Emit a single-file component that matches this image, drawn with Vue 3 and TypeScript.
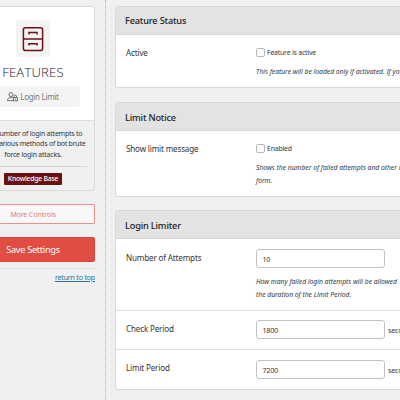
<script setup lang="ts">
interface Field {
  label: string
  kind: 'check' | 'number'
  value: string
  unit?: string
  help?: string[]
  size: string
}
interface Panel {
  title: string
  name: string
  fields: Field[]
}

const panels: Panel[] = [
  {
    title: 'Feature Status',
    name: 'status',
    fields: [
      { label: 'Active', kind: 'check', value: 'Feature is active', help: ['This feature will be loaded only if activated. If you'], size: 'f53' },
    ],
  },
  {
    title: 'Limit Notice',
    name: 'notice',
    fields: [
      { label: 'Show limit message', kind: 'check', value: 'Enabled', help: ['Shows the number of failed attempts and other limit', 'form.'], size: 'f65' },
    ],
  },
  {
    title: 'Login Limiter',
    name: 'limiter',
    fields: [
      { label: 'Number of Attempts', kind: 'number', value: '10', help: ['How many failed login attempts will be allowed', 'the duration of the Limit Period.'], size: 'f71' },
      { label: 'Check Period', kind: 'number', value: '1800', unit: 'seconds', size: 'f39' },
      { label: 'Limit Period', kind: 'number', value: '7200', unit: 'seconds', size: 'f39' },
    ],
  },
]
const about: string[] = ['the number of login attempts to', 'stop various methods of bot brute', 'force login attacks.']
</script>

<template>
  <div class="page">
    <aside class="sidebar">
      <section class="card">
        <div class="card-top">
          <div class="logo">
            <svg width="22" height="26" viewBox="0 0 22 26" fill="none" stroke="#6d1214" stroke-width="1.5">
              <rect x="1.4" y="1.8" width="19.2" height="22.6" rx="1.8" />
              <path d="M1.4 13.1H20.6M7 8.4V6.5H15V8.4M7 19.6V17.7H15V19.6" />
            </svg>
          </div>
          <h1>FEATURES</h1>
          <div class="chip">
            <svg width="11" height="10" viewBox="0 0 11 10" fill="none" stroke="#60646b" stroke-width="0.9">
              <circle cx="4" cy="2.6" r="2" />
              <path d="M.5 8.6C.5 6.4 1.8 5.5 4 5.5c.8 0 1.4.1 1.9.4M.3 8.7H6M7.2 5.5V4.2c0-1.6 2.3-1.6 2.3 0v1.3" />
              <rect x="6.4" y="5.5" width="4" height="3.3" />
              <path d="M8.4 6.5v1.2" />
            </svg>
            <span>Login Limit</span>
          </div>
        </div>
        <div class="card-info">
          <p v-for="line in about" :key="line">{{ line }}</p>
          <hr />
          <a class="kb"><span>Knowledge Base</span></a>
        </div>
      </section>
      <button class="more"><span>More Controls</span></button>
      <button class="save"><span>Save Settings</span></button>
      <div class="top-link"><a>return to top</a></div>
    </aside>
    <main class="main">
      <section v-for="panel in panels" :key="panel.name" class="panel" :class="panel.name">
        <header><h2>{{ panel.title }}</h2></header>
        <div v-for="field in panel.fields" :key="field.label" class="field" :class="field.size">
          <div class="label"><span>{{ field.label }}</span></div>
          <div class="control">
            <label v-if="field.kind === 'check'" class="check"><i class="box"></i><span>{{ field.value }}</span></label>
            <div v-else class="entry">
              <div class="input">{{ field.value }}</div>
              <span v-if="field.unit" class="unit">{{ field.unit }}</span>
            </div>
            <div v-if="field.help" class="help">
              <p v-for="line in field.help" :key="line">{{ line }}</p>
            </div>
          </div>
        </div>
      </section>
    </main>
  </div>
</template>

<style>
body {
  background: #f0f0f0;
  overflow: hidden;
}
</style>

<style scoped>
* {
  box-sizing: border-box;
}
.page {
  display: flex;
  width: 400px;
  height: 400px;
  overflow: hidden;
  background: #f0f0f0;
  color: #33373d;
  font-family: "Noto Sans", "Open Sans", sans-serif;
  white-space: nowrap;
}
h1,
h2,
p {
  margin: 0;
}
.sidebar {
  flex: none;
  width: 135px;
  margin-left: -29px;
  padding: 6px 10px 0 0;
  border-right: 1px dotted #b0b0b0;
}
.card {
  height: 185px;
  border: 1px solid #d9d9d9;
  border-radius: 3px;
  overflow: hidden;
}
.card-top {
  display: flex;
  flex-direction: column;
  align-items: center;
  height: 114px;
  padding-top: 13px;
  background: #fff;
  border-bottom: 1px solid #dcdcdc;
}
.logo {
  display: flex;
  align-items: center;
  justify-content: center;
  width: 34px;
  height: 37px;
  border-radius: 3px;
  background: #f4f4f4;
}
h1 {
  height: 22px;
  margin-top: 5px;
  font-family: "Open Sans", sans-serif;
  font-size: 13.2px;
  font-weight: 300;
  line-height: 21px;
  letter-spacing: 0.15px;
  color: #1d2127;
}
.chip {
  display: flex;
  align-items: center;
  justify-content: center;
  gap: 2px;
  width: 94px;
  height: 21px;
  margin-top: 2px;
  border-radius: 2px;
  background: #f4f4f4;
  color: #777b80;
  font-size: 8px;
  letter-spacing: -0.3px;
}
.card-info {
  display: flex;
  flex-direction: column;
  align-items: center;
  padding-top: 8px;
}
.card-info p {
  height: 10.3px;
  font-size: 7px;
  line-height: 10.6px;
  letter-spacing: -0.23px;
}
hr {
  width: 108px;
  height: 1px;
  margin: 6px 0;
  border: 0;
  background: #d5d5d5;
}
.kb {
  display: flex;
  align-items: center;
  justify-content: center;
  width: 58px;
  height: 12px;
  border-radius: 1px;
  background: #691113;
  color: #fff;
  font-size: 6.8px;
  font-weight: 500;
  letter-spacing: -0.22px;
}
button {
  display: flex;
  align-items: center;
  justify-content: center;
  width: 100%;
  padding: 0;
  font-family: inherit;
}
.more {
  height: 20px;
  margin-top: 13px;
  border: 1px solid #ee8f88;
  border-radius: 2px;
  background: #f8f8f8;
  color: #e57d76;
  font-size: 7.2px;
  letter-spacing: -0.18px;
}
.save {
  height: 25px;
  margin-top: 13px;
  border: 1px solid #dc443d;
  border-radius: 2px;
  background: #e14d43;
  color: #fff;
  font-size: 9.2px;
  letter-spacing: -0.3px;
}
.top-link {
  margin-top: 6px;
  border-top: 1px solid #e2e2e2;
  padding-top: 3px;
  text-align: right;
  font-size: 7px;
  line-height: 11px;
  letter-spacing: -0.17px;
  color: #2271a5;
}
.top-link a {
  text-decoration: underline;
}
.main {
  flex: none;
  width: 320px;
  padding: 6px 0 0 9px;
}
.panel {
  width: 310px;
  margin-bottom: 14px;
  border: 1px solid #d6d6d6;
  border-radius: 3px;
  background: #fff;
  overflow: hidden;
}
.status {
  height: 82px;
}
.notice {
  height: 95px;
  margin-bottom: 13px;
}
.limiter {
  height: 180px;
}
header {
  height: 28px;
  padding-left: 9px;
  border-bottom: 1px solid #d6d6d6;
  background: #e3e3e3;
}
h2 {
  font-size: 9.2px;
  font-weight: 500;
  line-height: 29px;
  letter-spacing: -0.17px;
  color: #1d2024;
}
.status h2 {
  line-height: 28px;
}
.field {
  display: grid;
  grid-template-columns: 130px 180px;
  padding: 11px 0 0 10px;
}
.field + .field {
  border-top: 1px solid #e0e0e0;
  padding-top: 9px;
}
.field + .field:last-child {
  padding-top: 10px;
}
.f53 {
  height: 53px;
}
.f65 {
  height: 65px;
}
.f71 {
  height: 71px;
  padding-top: 10px;
}
.f39 {
  height: 39px;
}
.label {
  font-size: 8.1px;
  line-height: 14px;
  letter-spacing: -0.17px;
}
.f71 .label,
.field + .field .label {
  line-height: 17px;
}
.field + .field:last-child .label {
  line-height: 16px;
}
.check {
  display: flex;
  align-items: center;
  gap: 2px;
  height: 13px;
  font-size: 6.9px;
  letter-spacing: -0.19px;
}
.box {
  width: 9px;
  height: 8.5px;
  border: 1px solid #b6b8ba;
  border-radius: 2px;
  background: #fff;
}
.entry {
  display: flex;
  align-items: center;
  gap: 3px;
}
.input {
  width: 129px;
  height: 19px;
  padding-left: 5.5px;
  border: 1px solid #bfc1c3;
  border-radius: 3px;
  font-size: 7.1px;
  line-height: 18px;
  letter-spacing: -0.2px;
}
.f39 + .f39 .input {
  line-height: 18px;
}
.unit {
  font-size: 7.2px;
  letter-spacing: -0.2px;
}
.help {
  margin-top: 6px;
}
.f71 .help {
  margin-top: 7px;
}
.help p {
  height: 12.5px;
  font-size: 6.8px;
  font-style: italic;
  line-height: 13px;
  letter-spacing: -0.03px;
}
</style>
